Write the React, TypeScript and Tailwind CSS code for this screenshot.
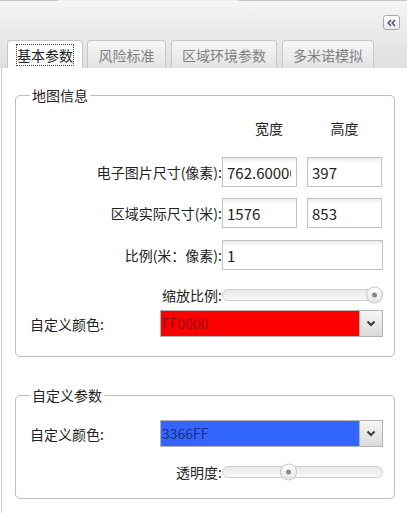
import React from "react";

interface TabProps {
  label: string;
  active?: boolean;
  className?: string;
}

const Tab = ({ label, active, className }: TabProps) => {
  return (
    <div
      className={
        "h-[28px] flex items-center justify-center rounded-t-[4px] border border-b-0 border-[#c6c6c6] " +
        (active
          ? "bg-[linear-gradient(#ffffff,#fbfbfb)] text-[#222] "
          : "bg-[linear-gradient(#f7f7f7,#e3e3e3)] text-[#7f7f7f] ") +
        className
      }
    >
      {active ? (
        <span className="border border-dotted border-[#444] leading-[20px] px-0">{label}</span>
      ) : (
        <span className="leading-[20px]">{label}</span>
      )}
    </div>
  );
};

const TextBox = ({ value, className }: { value: string; className: string }) => (
  <input
    defaultValue={value}
    readOnly
    size={1}
    className={
      "h-[30px] border border-[#c3c3c3] pl-[4px] pr-[5px] text-[15px] text-[#222] outline-none bg-[linear-gradient(#ebebeb,#ffffff_5px)] " +
      className
    }
  />
);

const Slider = ({ handle }: { handle: string }) => (
  <div className="relative flex-1 h-[12px] rounded-full border border-[#d0d0d0] bg-[linear-gradient(#e8e8e8,#f8f8f8)]">
    <div
      className={
        "absolute top-1/2 -translate-y-1/2 w-[17px] h-[17px] rounded-full border border-[#c4c4c4] bg-[linear-gradient(#ffffff,#e6e6e6)] flex items-center justify-center " +
        handle
      }
    >
      <div className="w-[5px] h-[5px] rounded-full bg-[#8a8a8a]" />
    </div>
  </div>
);

const ColorCombo = ({ text, box }: { text: string; box: string }) => (
  <div className="flex-1 flex h-[27px]">
    <div className={"flex-1 flex items-center pl-[1px] border border-[#b3b3b3] text-[14px] " + box}>{text}</div>
    <div className="w-[23px] flex items-center justify-center border border-l-0 border-[#b3b3b3] bg-[linear-gradient(#f6f6f6,#dadada)]">
      <svg width="10" height="7" viewBox="0 0 10 7">
        <polyline points="1.5,1.5 5,5 8.5,1.5" fill="none" stroke="#3a3a3a" strokeWidth="2" />
      </svg>
    </div>
  </div>
);

const Label = ({ children }: { children: React.ReactNode }) => (
  <div className="w-[192px] text-right leading-[20px]">{children}</div>
);

export default function App() {
  return (
    <div className="w-[407px] h-[513px] overflow-hidden bg-white font-['Noto_Sans_CJK_SC','Noto_Sans',sans-serif] text-[14px] text-[#222]">
      {/* header + tabs */}
      <div className="h-[68px] flex flex-col bg-[linear-gradient(#f5f5f5,#dfdfdf)]">
        <div className="flex h-px">
          <div className="w-[58px] bg-[#c4c4c4]" />
          <div className="w-[180px] bg-[#ededed]" />
          <div className="flex-1 bg-[#c4c4c4]" />
        </div>
        <div className="h-[39px] flex justify-end pr-[7px] pt-[14px]">
          <div className="w-[17px] h-[15px] rounded-[3px] border border-[#a9a9a9] bg-[linear-gradient(#ffffff,#ececec)] flex items-center justify-center">
            <svg width="9" height="8" viewBox="0 0 9 8">
              <polyline points="4,1 1.2,4 4,7" fill="none" stroke="#4a566e" strokeWidth="1.6" />
              <polyline points="8,1 5.2,4 8,7" fill="none" stroke="#4a566e" strokeWidth="1.6" />
            </svg>
          </div>
        </div>
        <div className="h-[28px] flex items-end pl-[7px]">
          <Tab label="基本参数" active className="w-[76px]" />
          <Tab label="风险标准" className="ml-[4px] w-[79px]" />
          <Tab label="区域环境参数" className="ml-[5px] w-[106px]" />
          <Tab label="多米诺模拟" className="ml-[5px] w-[92px]" />
        </div>
      </div>

      {/* body */}
      <div className="ml-px h-[445px] border-l border-[#cfcfcf] pt-[17px]">
        <fieldset className="min-w-0 ml-[13px] mr-[12px] rounded-[5px] border border-[#bfbfbf] pl-[14px] pr-[11px] pb-[19px]">
          <legend className="px-[2px] leading-[20px]">地图信息</legend>
          <div className="mt-[13px] h-[20px] flex leading-[20px]">
            <div className="w-[192px]" />
            <div className="w-[75px] pl-[19px] text-center">宽度</div>
            <div className="ml-[10px] w-[75px] text-center">高度</div>
          </div>
          <div className="mt-[19px] flex items-center">
            <Label>电子图片尺寸(像素):</Label>
            <TextBox value="762.60000" className="w-[75px]" />
            <TextBox value="397" className="ml-[10px] w-[75px]" />
          </div>
          <div className="mt-[11px] flex items-center">
            <Label>区域实际尺寸(米):</Label>
            <TextBox value="1576" className="w-[75px]" />
            <TextBox value="853" className="ml-[10px] w-[75px]" />
          </div>
          <div className="mt-[12px] flex items-center">
            <Label>比例(米：像素):</Label>
            <TextBox value="1" className="flex-1 min-w-0" />
          </div>
          <div className="mt-[16px] h-[18px] flex items-center">
            <Label>缩放比例:</Label>
            <Slider handle="right-[-1px]" />
          </div>
          <div className="mt-[6px] flex items-center">
            <div className="w-[130px] leading-[20px]">自定义颜色:</div>
            <ColorCombo text="FF0000" box="bg-[#ff0000] text-[#8a0000]" />
          </div>
        </fieldset>

        <fieldset className="min-w-0 mt-[28px] ml-[13px] mr-[12px] rounded-[5px] border border-[#bfbfbf] pl-[14px] pr-[11px] pb-[17px]">
          <legend className="px-[2px] leading-[20px]">自定义参数</legend>
          <div className="mt-[15px] flex items-center">
            <div className="w-[130px] leading-[20px]">自定义颜色:</div>
            <ColorCombo text="3366FF" box="bg-[#3366ff] text-[#1c2f7a]" />
          </div>
          <div className="mt-[16px] h-[18px] flex items-center">
            <Label>透明度:</Label>
            <Slider handle="left-[57px]" />
          </div>
        </fieldset>
      </div>
    </div>
  );
}
